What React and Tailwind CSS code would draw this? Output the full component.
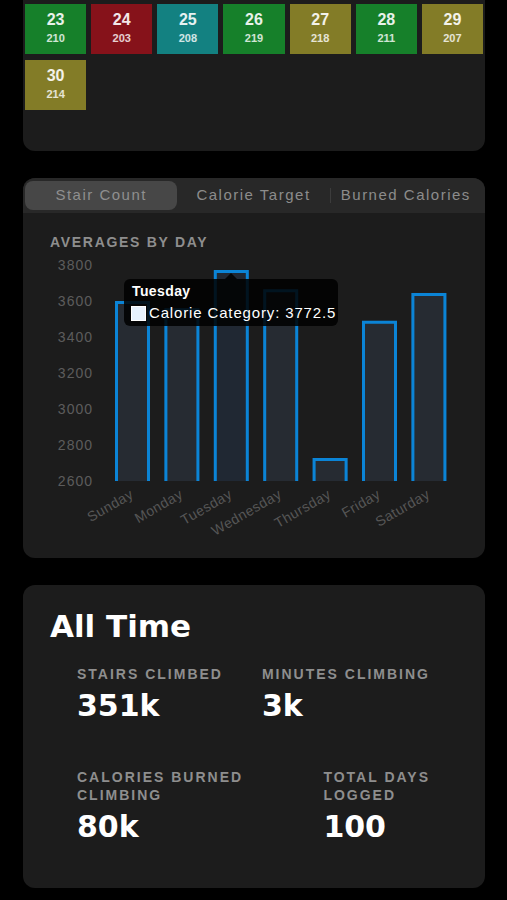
import React from 'react';

const TILES = [
  { day: 23, count: 210, color: 'bg-[#16802a]' },
  { day: 24, count: 203, color: 'bg-[#86121a]' },
  { day: 25, count: 208, color: 'bg-[#138181]' },
  { day: 26, count: 219, color: 'bg-[#16802a]' },
  { day: 27, count: 218, color: 'bg-[#837c27]' },
  { day: 28, count: 211, color: 'bg-[#16802a]' },
  { day: 29, count: 207, color: 'bg-[#837c27]' },
  { day: 30, count: 214, color: 'bg-[#837c27]' },
];

const DAYS = [
  { name: 'Sunday', value: 3600 },
  { name: 'Monday', value: 3560 },
  { name: 'Tuesday', value: 3772.5 },
  { name: 'Wednesday', value: 3665 },
  { name: 'Thursday', value: 2728 },
  { name: 'Friday', value: 3490 },
  { name: 'Saturday', value: 3645 },
];

const TICKS = [3800, 3600, 3400, 3200, 3000, 2800, 2600];

const BASE = 229;
const yOf = (v) => BASE - (v - 2600) * 0.18;

const MonthTiles = () => (
  <div className="bg-[#1c1c1c] rounded-b-xl px-[2px] pt-[4px] pb-[41px]">
    <div className="grid grid-cols-7 gap-x-[5px] gap-y-[6px]">
      {TILES.map((t) => (
        <div
          key={t.day}
          className={`${t.color} h-[50px] flex flex-col items-center justify-center pb-[2px] text-white/90`}
        >
          <span className="text-[16px] font-bold leading-[18px]">{t.day}</span>
          <span className="text-[11px] font-bold leading-[13px] mt-[3px] text-white/80">{t.count}</span>
        </div>
      ))}
    </div>
  </div>
);

const Tabs = () => {
  const tabs = ['Stair Count', 'Calorie Target', 'Burned Calories'];
  return (
    <div className="bg-[#282828] h-[35px] p-[3px] pl-[2px] flex items-stretch">
      {tabs.map((label, i) => (
        <div key={label} className="flex-1 flex items-center relative">
          {i === 2 && <div className="absolute left-0 top-[7px] bottom-[7px] w-px bg-[#3c3c3c]" />}
          <div
            className={`flex-1 h-full flex items-center justify-center rounded-lg text-[15px] tracking-[1.5px] ${
              i === 0 ? 'bg-[#474747] text-[#8f8f8f]' : 'text-[#8c8c8c]'
            }`}
          >
            {label}
          </div>
        </div>
      ))}
    </div>
  );
};

const Chart = () => (
  <div className="relative mt-[1px]">
    <svg width="410" height="290" style={{ fontFamily: '"Liberation Sans", Arial, sans-serif' }}>
      {TICKS.map((t) => (
        <text
          key={t}
          x="43"
          y={yOf(t) + 5}
          textAnchor="end"
          fontSize="14"
          letterSpacing="1"
          fill="#5c5c5c"
        >
          {t}
        </text>
      ))}
      {DAYS.map((d, i) => {
        const x = 65 + 49.4 * i;
        const top = yOf(d.value);
        const cx = x + 17.5;
        return (
          <g key={d.name}>
            <rect x={x} y={top} width="35" height={BASE - top} fill={i === 2 ? '#202833' : '#262b32'} />
            <path
              d={`M${x + 1.5} ${BASE} V${top + 1.5} H${x + 33.5} V${BASE}`}
              fill="none"
              stroke="#0b84d6"
              strokeWidth="3"
            />
            <text
              x={cx + 2}
              y="245"
              textAnchor="end"
              fontSize="14"
              letterSpacing="0.5"
              fill="#565656"
              transform={`rotate(-30 ${cx + 2} 245)`}
            >
              {d.name}
            </text>
          </g>
        );
      })}
    </svg>

    <div className="absolute left-[74px] top-[27px] w-[214px] h-[47px] rounded-md bg-black/85 px-[8px] pt-[4px] text-white whitespace-nowrap">
      <div className="absolute left-[101px] -top-[6px] w-0 h-0 border-x-[6px] border-x-transparent border-b-[6px] border-b-black/85" />
      <div className="text-[14px] font-bold leading-[17px] tracking-[0.4px]">Tuesday</div>
      <div className="flex items-center mt-[3px] -ml-[1px] leading-[20px]">
        <span className="shrink-0 w-[15px] h-[15px] bg-[#e6f2ff] border border-white mr-[3px]" />
        <span className="text-[15px] tracking-[0.85px]">Calorie Category: 3772.5</span>
      </div>
    </div>
  </div>
);

const Stat = ({ label, value }) => (
  <div className="flex flex-col">
    <div className="text-[14px] font-bold leading-[18px] tracking-[2px] text-[#8e8e8e] whitespace-nowrap">
      {label}
    </div>
    <div className="mt-[5px] text-[30px] font-bold leading-[36px] text-white font-['DejaVu_Sans',sans-serif]">
      {value}
    </div>
  </div>
);

export default function App() {
  return (
    <div className="min-h-screen bg-black pl-[23px] pr-[22px] pb-4 flex flex-col gap-[27px] font-['Liberation_Sans',Arial,sans-serif]">
      <MonthTiles />

      <div className="bg-[#1c1c1c] rounded-xl overflow-hidden pb-[16px]">
        <Tabs />
        <div className="px-[27px]">
          <h3 className="mt-[21px] text-[14px] font-bold leading-[17px] tracking-[1.7px] text-[#8e8e8e]">
            AVERAGES BY DAY
          </h3>
          <Chart />
        </div>
      </div>

      <div className="bg-[#1c1c1c] rounded-xl px-[27px] pt-[23px] pb-[43px]">
        <h2 className="text-[31px] font-bold leading-[36px] text-white font-['DejaVu_Sans',sans-serif]">
          All Time
        </h2>
        <div className="pl-[27px] pr-[28px]">
          <div className="flex justify-between mt-[21px]">
            <Stat label="STAIRS CLIMBED" value="351k" />
            <Stat label="MINUTES CLIMBING" value="3k" />
          </div>
          <div className="flex justify-between mt-[44px]">
            <Stat label={<>CALORIES BURNED<br />CLIMBING</>} value="80k" />
            <Stat label={<>TOTAL DAYS<br />LOGGED</>} value="100" />
          </div>
        </div>
      </div>
    </div>
  );
}
